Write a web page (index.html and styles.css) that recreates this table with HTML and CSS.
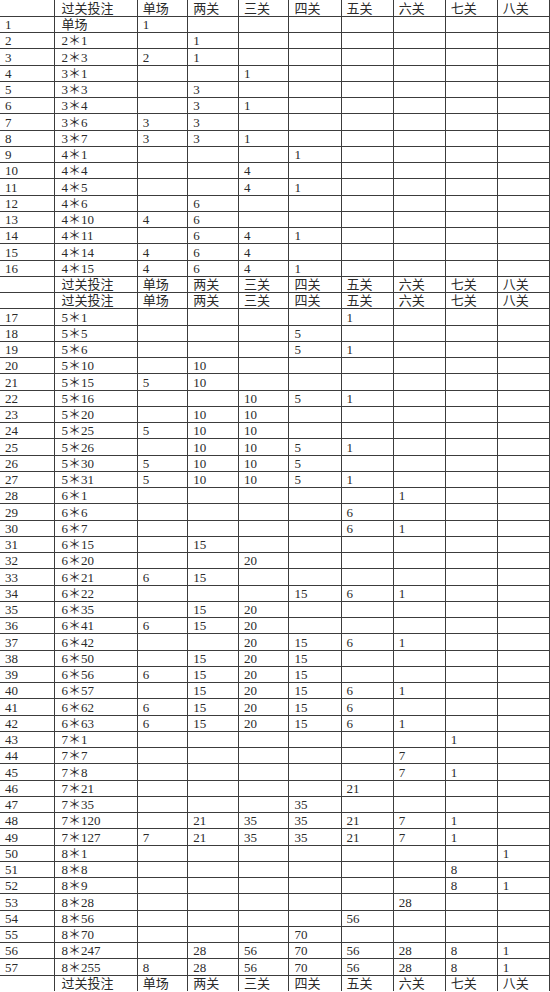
FILE: index.html
```html
<!DOCTYPE html>
<html lang="zh">
<head>
<meta charset="utf-8">
<title>过关投注</title>
<link rel="stylesheet" href="styles.css">
</head>
<body>
<table class="grid">
<colgroup>
<col class="c-idx"><col class="c-bet"><col class="c-n"><col class="c-n"><col class="c-n"><col class="c-w"><col class="c-w"><col class="c-w"><col class="c-w"><col class="c-w">
</colgroup>
<tbody>
<tr class="hd"><td></td><td>过关投注</td><td>单场</td><td>两关</td><td>三关</td><td>四关</td><td>五关</td><td>六关</td><td>七关</td><td>八关</td></tr>
<tr><td>1</td><td>单场</td><td>1</td><td></td><td></td><td></td><td></td><td></td><td></td><td></td></tr>
<tr><td>2</td><td>2＊1</td><td></td><td>1</td><td></td><td></td><td></td><td></td><td></td><td></td></tr>
<tr><td>3</td><td>2＊3</td><td>2</td><td>1</td><td></td><td></td><td></td><td></td><td></td><td></td></tr>
<tr><td>4</td><td>3＊1</td><td></td><td></td><td>1</td><td></td><td></td><td></td><td></td><td></td></tr>
<tr><td>5</td><td>3＊3</td><td></td><td>3</td><td></td><td></td><td></td><td></td><td></td><td></td></tr>
<tr><td>6</td><td>3＊4</td><td></td><td>3</td><td>1</td><td></td><td></td><td></td><td></td><td></td></tr>
<tr><td>7</td><td>3＊6</td><td>3</td><td>3</td><td></td><td></td><td></td><td></td><td></td><td></td></tr>
<tr><td>8</td><td>3＊7</td><td>3</td><td>3</td><td>1</td><td></td><td></td><td></td><td></td><td></td></tr>
<tr><td>9</td><td>4＊1</td><td></td><td></td><td></td><td>1</td><td></td><td></td><td></td><td></td></tr>
<tr><td>10</td><td>4＊4</td><td></td><td></td><td>4</td><td></td><td></td><td></td><td></td><td></td></tr>
<tr><td>11</td><td>4＊5</td><td></td><td></td><td>4</td><td>1</td><td></td><td></td><td></td><td></td></tr>
<tr><td>12</td><td>4＊6</td><td></td><td>6</td><td></td><td></td><td></td><td></td><td></td><td></td></tr>
<tr><td>13</td><td>4＊10</td><td>4</td><td>6</td><td></td><td></td><td></td><td></td><td></td><td></td></tr>
<tr><td>14</td><td>4＊11</td><td></td><td>6</td><td>4</td><td>1</td><td></td><td></td><td></td><td></td></tr>
<tr><td>15</td><td>4＊14</td><td>4</td><td>6</td><td>4</td><td></td><td></td><td></td><td></td><td></td></tr>
<tr><td>16</td><td>4＊15</td><td>4</td><td>6</td><td>4</td><td>1</td><td></td><td></td><td></td><td></td></tr>
<tr class="hd"><td></td><td>过关投注</td><td>单场</td><td>两关</td><td>三关</td><td>四关</td><td>五关</td><td>六关</td><td>七关</td><td>八关</td></tr>
<tr class="hd"><td></td><td>过关投注</td><td>单场</td><td>两关</td><td>三关</td><td>四关</td><td>五关</td><td>六关</td><td>七关</td><td>八关</td></tr>
<tr><td>17</td><td>5＊1</td><td></td><td></td><td></td><td></td><td>1</td><td></td><td></td><td></td></tr>
<tr><td>18</td><td>5＊5</td><td></td><td></td><td></td><td>5</td><td></td><td></td><td></td><td></td></tr>
<tr><td>19</td><td>5＊6</td><td></td><td></td><td></td><td>5</td><td>1</td><td></td><td></td><td></td></tr>
<tr><td>20</td><td>5＊10</td><td></td><td>10</td><td></td><td></td><td></td><td></td><td></td><td></td></tr>
<tr><td>21</td><td>5＊15</td><td>5</td><td>10</td><td></td><td></td><td></td><td></td><td></td><td></td></tr>
<tr><td>22</td><td>5＊16</td><td></td><td></td><td>10</td><td>5</td><td>1</td><td></td><td></td><td></td></tr>
<tr><td>23</td><td>5＊20</td><td></td><td>10</td><td>10</td><td></td><td></td><td></td><td></td><td></td></tr>
<tr><td>24</td><td>5＊25</td><td>5</td><td>10</td><td>10</td><td></td><td></td><td></td><td></td><td></td></tr>
<tr><td>25</td><td>5＊26</td><td></td><td>10</td><td>10</td><td>5</td><td>1</td><td></td><td></td><td></td></tr>
<tr><td>26</td><td>5＊30</td><td>5</td><td>10</td><td>10</td><td>5</td><td></td><td></td><td></td><td></td></tr>
<tr><td>27</td><td>5＊31</td><td>5</td><td>10</td><td>10</td><td>5</td><td>1</td><td></td><td></td><td></td></tr>
<tr><td>28</td><td>6＊1</td><td></td><td></td><td></td><td></td><td></td><td>1</td><td></td><td></td></tr>
<tr><td>29</td><td>6＊6</td><td></td><td></td><td></td><td></td><td>6</td><td></td><td></td><td></td></tr>
<tr><td>30</td><td>6＊7</td><td></td><td></td><td></td><td></td><td>6</td><td>1</td><td></td><td></td></tr>
<tr><td>31</td><td>6＊15</td><td></td><td>15</td><td></td><td></td><td></td><td></td><td></td><td></td></tr>
<tr><td>32</td><td>6＊20</td><td></td><td></td><td>20</td><td></td><td></td><td></td><td></td><td></td></tr>
<tr><td>33</td><td>6＊21</td><td>6</td><td>15</td><td></td><td></td><td></td><td></td><td></td><td></td></tr>
<tr><td>34</td><td>6＊22</td><td></td><td></td><td></td><td>15</td><td>6</td><td>1</td><td></td><td></td></tr>
<tr><td>35</td><td>6＊35</td><td></td><td>15</td><td>20</td><td></td><td></td><td></td><td></td><td></td></tr>
<tr><td>36</td><td>6＊41</td><td>6</td><td>15</td><td>20</td><td></td><td></td><td></td><td></td><td></td></tr>
<tr><td>37</td><td>6＊42</td><td></td><td></td><td>20</td><td>15</td><td>6</td><td>1</td><td></td><td></td></tr>
<tr><td>38</td><td>6＊50</td><td></td><td>15</td><td>20</td><td>15</td><td></td><td></td><td></td><td></td></tr>
<tr><td>39</td><td>6＊56</td><td>6</td><td>15</td><td>20</td><td>15</td><td></td><td></td><td></td><td></td></tr>
<tr><td>40</td><td>6＊57</td><td></td><td>15</td><td>20</td><td>15</td><td>6</td><td>1</td><td></td><td></td></tr>
<tr><td>41</td><td>6＊62</td><td>6</td><td>15</td><td>20</td><td>15</td><td>6</td><td></td><td></td><td></td></tr>
<tr><td>42</td><td>6＊63</td><td>6</td><td>15</td><td>20</td><td>15</td><td>6</td><td>1</td><td></td><td></td></tr>
<tr><td>43</td><td>7＊1</td><td></td><td></td><td></td><td></td><td></td><td></td><td>1</td><td></td></tr>
<tr><td>44</td><td>7＊7</td><td></td><td></td><td></td><td></td><td></td><td>7</td><td></td><td></td></tr>
<tr><td>45</td><td>7＊8</td><td></td><td></td><td></td><td></td><td></td><td>7</td><td>1</td><td></td></tr>
<tr><td>46</td><td>7＊21</td><td></td><td></td><td></td><td></td><td>21</td><td></td><td></td><td></td></tr>
<tr><td>47</td><td>7＊35</td><td></td><td></td><td></td><td>35</td><td></td><td></td><td></td><td></td></tr>
<tr><td>48</td><td>7＊120</td><td></td><td>21</td><td>35</td><td>35</td><td>21</td><td>7</td><td>1</td><td></td></tr>
<tr><td>49</td><td>7＊127</td><td>7</td><td>21</td><td>35</td><td>35</td><td>21</td><td>7</td><td>1</td><td></td></tr>
<tr><td>50</td><td>8＊1</td><td></td><td></td><td></td><td></td><td></td><td></td><td></td><td>1</td></tr>
<tr><td>51</td><td>8＊8</td><td></td><td></td><td></td><td></td><td></td><td></td><td>8</td><td></td></tr>
<tr><td>52</td><td>8＊9</td><td></td><td></td><td></td><td></td><td></td><td></td><td>8</td><td>1</td></tr>
<tr><td>53</td><td>8＊28</td><td></td><td></td><td></td><td></td><td></td><td>28</td><td></td><td></td></tr>
<tr><td>54</td><td>8＊56</td><td></td><td></td><td></td><td></td><td>56</td><td></td><td></td><td></td></tr>
<tr><td>55</td><td>8＊70</td><td></td><td></td><td></td><td>70</td><td></td><td></td><td></td><td></td></tr>
<tr><td>56</td><td>8＊247</td><td></td><td>28</td><td>56</td><td>70</td><td>56</td><td>28</td><td>8</td><td>1</td></tr>
<tr><td>57</td><td>8＊255</td><td>8</td><td>28</td><td>56</td><td>70</td><td>56</td><td>28</td><td>8</td><td>1</td></tr>
<tr class="hd"><td></td><td>过关投注</td><td>单场</td><td>两关</td><td>三关</td><td>四关</td><td>五关</td><td>六关</td><td>七关</td><td>八关</td></tr>
</tbody>
</table>
</body>
</html>
```

FILE: styles.css
```css
html, body {
  margin: 0;
  padding: 0;
  background: #ffffff;
}

.grid {
  border-collapse: collapse;
  table-layout: fixed;
  width: 550px;
  font-family: "Liberation Serif", "Noto Sans CJK SC", serif;
  font-size: 13px;
  color: #2a2a2a;
}

.c-idx { width: 54px; }
.c-bet { width: 83px; }
.c-n { width: 50.5px; }
.c-w { width: 52px; }

.grid tr {
  height: 16.26px;
}

.grid td {
  padding: 0 0 0 5px;
  line-height: 14px;
  vertical-align: bottom;
  white-space: nowrap;
  overflow: hidden;
  border-right: 1px solid #3c3c3c;
  border-bottom: 1px solid #3c3c3c;
}

.grid td:nth-child(2) {
  padding-left: 7px;
}

.grid tr:last-child td {
  border-bottom: none;
}
```
